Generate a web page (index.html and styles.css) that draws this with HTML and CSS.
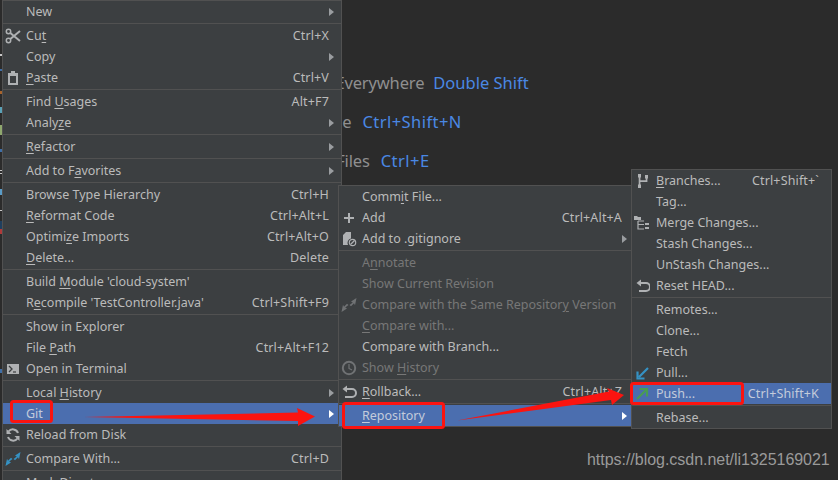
FILE: index.html
```html
<!DOCTYPE html>
<html lang="en">
<head>
<meta charset="utf-8">
<title>Git push context menu</title>
<link rel="stylesheet" href="styles.css">
</head>
<body>
<main class="editor">
  <div class="hints">
    <p class="hint"><span>Search Everywhere</span><b>Double Shift</b></p>
    <p class="hint"><span>Go to File</span><b class="chord">Ctrl+Shift+N</b></p>
    <p class="hint"><span>Recent Files</span><b class="chord">Ctrl+E</b></p>
  </div>
  <div class="watermark">https://blog.csdn.net/li1325169021</div>
  <svg class="gutter" viewBox="0 0 2 480" aria-hidden="true">
    <rect y="54" width="2" height="2" fill="#c9c9c9"/>
    <rect y="69" width="2" height="2" fill="#3f6fa8"/>
    <rect y="91" width="2" height="3" fill="#a8642c"/>
    <rect y="107" width="2" height="6" fill="#5aa2b8"/>
    <rect y="125" width="2" height="10" fill="#8fa86e"/>
    <rect y="149" width="2" height="3" fill="#3f6fa8"/>
    <rect y="170" width="2" height="1" fill="#c9c9c9"/>
    <rect y="173" width="2" height="1" fill="#c9c9c9"/>
    <rect y="189" width="2" height="6" fill="#5a9cc8"/>
    <rect y="210" width="2" height="1" fill="#c9c9c9"/>
    <rect y="221" width="2" height="8" fill="#1f3f5f"/>
    <rect y="229" width="2" height="5" fill="#b03a3a"/>
    <rect y="369" width="2" height="4" fill="#3f6fa8"/>
  </svg>
</main>

<nav class="menu menu-main">
  <div class="row"><i class="ico"></i><span class="label">New</span><i class="arrow"></i></div>
  <hr>
  <div class="row"><i class="ico"><svg viewBox="0 0 16 16"><circle cx="3.5" cy="3.500" r="2.200" class="line w15"/><circle cx="3.5" cy="12.500" r="2.200" class="line w15"/><path d="M5.300 5 15 13M5.300 11 15 3" class="line w2"/></svg></i><span class="label">Cu<u>t</u></span><span class="key">Ctrl+X</span></div>
  <div class="row"><i class="ico"></i><span class="label">Copy</span><i class="arrow"></i></div>
  <div class="row"><i class="ico"><svg viewBox="0 0 16 16"><path d="M3 3h3V1h4v2h3v12H3z" class="fill"/><path d="M5 6h6v7H5z" fill="#3c3f41"/></svg></i><span class="label"><u>P</u>aste</span><span class="key">Ctrl+V</span></div>
  <hr>
  <div class="row"><i class="ico"></i><span class="label">Find <u>U</u>sages</span><span class="key">Alt+F7</span></div>
  <div class="row"><i class="ico"></i><span class="label">Analy<u>z</u>e</span><i class="arrow"></i></div>
  <hr>
  <div class="row"><i class="ico"></i><span class="label"><u>R</u>efactor</span><i class="arrow"></i></div>
  <hr>
  <div class="row"><i class="ico"></i><span class="label">Add to F<u>a</u>vorites</span><i class="arrow"></i></div>
  <hr>
  <div class="row"><i class="ico"></i><span class="label">Browse Type Hierarchy</span><span class="key">Ctrl+H</span></div>
  <div class="row"><i class="ico"></i><span class="label"><u>R</u>eformat Code</span><span class="key">Ctrl+Alt+L</span></div>
  <div class="row"><i class="ico"></i><span class="label">Optimi<u>z</u>e Imports</span><span class="key">Ctrl+Alt+O</span></div>
  <div class="row"><i class="ico"></i><span class="label"><u>D</u>elete...</span><span class="key">Delete</span></div>
  <hr>
  <div class="row"><i class="ico"></i><span class="label">Build <u>M</u>odule 'cloud-system'</span></div>
  <div class="row"><i class="ico"></i><span class="label">R<u>e</u>compile 'TestController.java'</span><span class="key">Ctrl+Shift+F9</span></div>
  <hr>
  <div class="row"><i class="ico"></i><span class="label">Show in Explorer</span></div>
  <div class="row"><i class="ico"></i><span class="label">File <u>P</u>ath</span><span class="key">Ctrl+Alt+F12</span></div>
  <div class="row"><i class="ico"><svg viewBox="0 0 16 16"><path d="M2 3h12v10H2z" class="fill"/><path d="m4 5 3 3-3 3" fill="none" stroke="#3c3f41" stroke-width="1.3"/><path d="M8 11h3" stroke="#3c3f41" stroke-width="1.2"/></svg></i><span class="label">Open in Terminal</span></div>
  <hr>
  <div class="row"><i class="ico"></i><span class="label">Local <u>H</u>istory</span><i class="arrow"></i></div>
  <div class="row active"><i class="ico"></i><span class="label"><u>G</u>it</span><i class="arrow"></i></div>
  <div class="row"><i class="ico"><svg viewBox="0 0 16 16"><path d="M13 6A5.5 5.5 0 0 0 3.500 4.500M3 10a5.500 5.500 0 0 0 9.500 1.500" class="line w2"/><path d="M1.500 2v5h5zM14.500 14V9h-5z" class="fill"/></svg></i><span class="label">Reload from Disk</span></div>
  <hr>
  <div class="row"><i class="ico"><svg viewBox="0 0 16 16"><path d="M15.500 1 10 4.500l1.800 1L8.500 8l1.500 1.300 3-3 1 2zM.5 15 6 11.500l-1.800-1L7.500 8 6 6.700l-3 3-1-2z" fill="#3592c4"/></svg></i><span class="label">Compare With...</span><span class="key">Ctrl+D</span></div>
  <hr>
  <div class="row"><i class="ico"></i><span class="label">Mark Directory as</span></div>
</nav>

<nav class="menu menu-git">
  <div class="row"><i class="ico"></i><span class="label">Comm<u>i</u>t File...</span></div>
  <div class="row"><i class="ico"><svg viewBox="0 0 16 16"><path d="M7 3h2v4h4v2H9v4H7V9H3V7h4z" class="fill"/></svg></i><span class="label">Add</span><span class="key">Ctrl+Alt+A</span></div>
  <div class="row"><i class="ico"><svg viewBox="0 0 16 16"><path d="M5 1h5v6.500A4.500 4.500 0 0 0 7 14H2V4z" class="fill"/><circle cx="11.500" cy="11.500" r="3.200" class="line"/><path d="m9.500 13.500 4-4" class="line"/></svg></i><span class="label">Add to .gitignore</span><i class="arrow"></i></div>
  <hr>
  <div class="row off"><i class="ico"></i><span class="label">A<u>n</u>notate</span></div>
  <div class="row off"><i class="ico"></i><span class="label">Show Current Revision</span></div>
  <div class="row off"><i class="ico dim"><svg viewBox="0 0 16 16"><path d="M15.500 1 10 4.500l1.800 1L8.500 8l1.500 1.300 3-3 1 2zM.5 15 6 11.500l-1.800-1L7.500 8 6 6.700l-3 3-1-2z" class="fill"/></svg></i><span class="label">Compare with the Same Repositor<u>y</u> Version</span></div>
  <div class="row off"><i class="ico"></i><span class="label"><u>C</u>ompare with...</span></div>
  <div class="row"><i class="ico"></i><span class="label">Compare with Branch...</span></div>
  <div class="row off"><i class="ico dim"><svg viewBox="0 0 16 16"><circle cx="8" cy="8" r="6.200" class="line w2"/><path d="M8 4v4.500l3 1.500" class="line"/></svg></i><span class="label">Show <u>H</u>istory</span></div>
  <hr>
  <div class="row"><i class="ico"><svg viewBox="0 0 16 16"><path d="M5 5h6a3.700 3.700 0 0 1 0 8H4" class="line w2"/><path d="M6 1.500v7L1.500 5z" class="fill"/></svg></i><span class="label"><u>R</u>ollback...</span><span class="key">Ctrl+Alt+Z</span></div>
  <hr>
  <div class="row active"><i class="ico"></i><span class="label"><u>R</u>epository</span><i class="arrow"></i></div>
</nav>

<nav class="menu menu-repo">
  <div class="row"><i class="ico"><svg viewBox="0 0 16 16"><path d="M4 1h3v3.500h-.6v7H7V15H4v-3.500h.7v-7H4zM11 2h3v3.500h-.6V9H6V7.300h5.700V5.500H11z" class="fill"/></svg></i><span class="label"><u>B</u>ranches...</span><span class="key">Ctrl+Shift+`</span></div>
  <div class="row"><i class="ico"></i><span class="label">Tag...</span></div>
  <div class="row"><i class="ico"><svg viewBox="0 0 16 16"><path d="M0 1h3l1 1h3v3H0z" class="fill"/><path d="M4 6v8h6M4 9.500h6M4 6h6" class="line"/><path d="M11 8h4v2h-4zM11 12h4v2h-4z" class="fill"/></svg></i><span class="label">Merge Changes...</span></div>
  <div class="row"><i class="ico"></i><span class="label">Stash Changes...</span></div>
  <div class="row"><i class="ico"></i><span class="label">UnStash Changes...</span></div>
  <div class="row"><i class="ico"><svg viewBox="0 0 16 16"><path d="M6 5h6a3.700 3.700 0 0 1 0 8H5" class="line w2"/><path d="M7 1.500v7L2.500 5z" class="fill"/></svg></i><span class="label">Reset HEAD...</span></div>
  <hr>
  <div class="row"><i class="ico"></i><span class="label">Remotes...</span></div>
  <div class="row"><i class="ico"></i><span class="label">Clone...</span></div>
  <div class="row"><i class="ico"></i><span class="label">Fetch</span></div>
  <div class="row"><i class="ico"><svg viewBox="0 0 16 16"><path d="M14 3 5 12M3.500 6.500v7h7" fill="none" stroke="#3592c4" stroke-width="2.200"/></svg></i><span class="label">Pull...</span></div>
  <div class="row active"><i class="ico"><svg viewBox="0 0 16 16"><path d="M3 13 12 4M5.500 3h7.500v7.500" fill="none" stroke="#499c54" stroke-width="2.200"/></svg></i><span class="label">Push...</span><span class="key">Ctrl+Shift+K</span></div>
  <hr>
  <div class="row"><i class="ico"></i><span class="label">Rebase...</span></div>
</nav>

<svg class="marks" viewBox="0 0 838 480" aria-hidden="true">
  <rect x="11.500" y="401.500" width="40" height="20" rx="2"/>
  <rect x="343.500" y="403.500" width="100" height="24" rx="2"/>
  <rect x="631.500" y="383.500" width="111" height="20" rx="2"/>
  <path class="solid" d="M84 417 298 412.500 297 408 315 416.500 298 426 298 421z"/>
  <path class="solid" d="M457 420.500 609 391.500 607 388 624 395 612 405 611 400z"/>
</svg>
</body>
</html>
```
FILE: styles.css
```css
* { box-sizing: border-box; }
html, body { margin: 0; height: 100%; overflow: hidden; }
body {
  background: #2b2b2b;
  font-family: "Noto Sans", "Liberation Sans", sans-serif;
  color: #bbbbbb;
}
.editor { position: relative; width: 838px; height: 480px; padding: 71px 0 0 280px; }
.hints { display: flex; flex-direction: column; gap: 15px; }
.hint { margin: 0; display: flex; gap: 9px; font-size: 16.500px; line-height: 24px; height: 24px; color: #8f8f8f; }
.hint span { letter-spacing: -.15px; }
.hint b { font-weight: 400; color: #4a88e4; }
.hint .chord { margin-left: 2px; letter-spacing: .45px; }
.watermark {
  position: absolute; left: 587px; top: 451px;
  font: 16px/18px "Liberation Sans", sans-serif; color: #9a9a9a;
  letter-spacing: -.03px;
}
.gutter { position: absolute; left: 0; top: 0; width: 2px; height: 480px; }
.menu {
  position: absolute;
  background: #3c3f41;
  border: 1px solid #515151;
  font-size: 12.500px;
}
.menu-main { left: 2px; top: 0; width: 340px; height: 494px; --pad: 12px; }
.menu-git { left: 338px; top: 185px; width: 294px; --pad: 9px; }
.menu-repo { left: 631px; top: 169px; width: 201px; --pad: 12px; }
.row { display: flex; align-items: center; height: 21px; padding-right: var(--pad); white-space: nowrap; }
.row.active { background: #4b6eaf; color: #c3cbdb; }
.row.off { color: #777777; }
.ico { flex: none; width: 23px; height: 21px; padding-left: 2px; display: flex; align-items: center; font-style: normal; }
.ico svg { width: 16px; height: 16px; }
.dim { opacity: .45; }
.menu-repo .ico { width: 24px; }
.label { flex: 1; }
.key { margin-left: 10px; letter-spacing: .15px; }
u { text-underline-offset: 2px; text-decoration-thickness: 1px; }
.arrow {
  flex: none; width: 0; height: 0;
  margin-right: -5px;
  border-left: 5px solid #9a9da0;
  border-top: 4.500px solid transparent;
  border-bottom: 4.500px solid transparent;
}
.active .arrow { border-left-color: #ffffff; }
hr { margin: 1px 0; height: 1px; border: 0; background: #515151; }
.line { fill: none; stroke: #afb1b3; stroke-width: 1.200; }
.w15 { stroke-width: 1.500; }
.w2 { stroke-width: 2; }
.fill { fill: #afb1b3; }
.marks { position: absolute; left: 0; top: 0; width: 838px; height: 480px; pointer-events: none; }
.marks rect { fill: none; stroke: #fb1410; stroke-width: 3; }
.marks .solid { fill: #fb1410; }
```
